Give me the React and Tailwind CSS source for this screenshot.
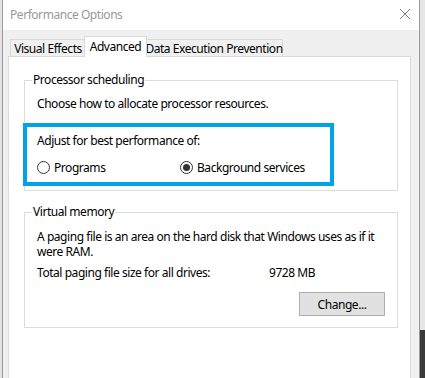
import React from "react";

function Radio({ checked, label, className = "" }) {
  return (
    <div className={"flex items-center " + className}>
      <span className="flex h-[13px] w-[13px] items-center justify-center rounded-full border border-[#333333] bg-white">
        {checked && <span className="h-[7px] w-[7px] rounded-full bg-[#333333]" />}
      </span>
      <span className="ml-[4px]">{label}</span>
    </div>
  );
}

function Group({ title, children, className = "" }) {
  return (
    <div className={"relative border border-[#dcdcdc] " + className}>
      <span className="absolute -top-[9px] left-[7px] bg-white px-[1px] leading-[16px]">{title}</span>
      {children}
    </div>
  );
}

export default function App() {
  return (
    <div
      className="flex h-[378px] w-[425px] overflow-hidden whitespace-nowrap bg-[#f0f0f0] text-[12px] leading-[15px] tracking-[-0.45px] text-black"
      style={{ fontFamily: '"Noto Sans", "Segoe UI", sans-serif' }}
    >
      <div className="w-[2px] bg-[#e4e4e4]" />
      <div className="flex w-[418px] flex-col border-x border-[#9a9a9a]">
        <div className="flex h-[30px] items-center justify-between bg-white pl-[7px] pr-[8px]">
          <span className="mb-[1px] text-[#999999]">Performance Options</span>
          <svg width="12" height="12" viewBox="0 0 12 12" className="mb-[2px]">
            <path d="M1 1 L11 11 M11 1 L1 11" stroke="#808080" strokeWidth="1" fill="none" />
          </svg>
        </div>
        <div className="flex flex-1 flex-col pl-[5px] pr-[8px] pt-[6px]">
          <div className="flex items-end pl-[2px]">
            <div className="flex h-[17px] w-[76px] items-center justify-center border border-b-0 border-[#d9d9d9] bg-[#f0f0f0]">
              Visual Effects
            </div>
            <div className="relative z-10 -mx-[2px] -mb-px flex h-[21px] w-[63px] items-start justify-center border border-b-0 border-[#d9d9d9] bg-white pt-[2px]">
              Advanced
            </div>
            <div className="flex h-[17px] w-[138px] items-center justify-center border border-b-0 border-[#d9d9d9] bg-[#f0f0f0]">
              Data Execution Prevention
            </div>
          </div>
          <div className="flex flex-1 flex-col border border-b-0 border-[#d9d9d9] bg-white pl-[15px] pr-[12px] pt-[23px]">
            <Group title="Processor scheduling" className="pb-[15px] pl-[12px] pt-[15px]">
              <div>Choose how to allocate processor resources.</div>
              <div className="mt-[22px]">Adjust for best performance of:</div>
              <div className="mt-[12px] flex h-[15px] items-center">
                <Radio label="Programs" className="w-[143px]" />
                <Radio checked label="Background services" />
              </div>
              <div className="absolute left-[-2px] top-[42px] h-[63px] w-[311px] border-4 border-[#00a2e8]" />
            </Group>
            <Group title="Virtual memory" className="mt-[21px] flex flex-col pb-[11px] pl-[12px] pr-[12px] pt-[16px]">
              <div>
                A paging file is an area on the hard disk that Windows uses as if it
                <br />
                were RAM.
              </div>
              <div className="mt-[6px] flex">
                <span className="w-[232px]">Total paging file size for all drives:</span>
                <span>9728 MB</span>
              </div>
              <button className="mt-[12px] flex h-[24px] w-[86px] items-center justify-center self-end border border-[#adadad] bg-[#e1e1e1] tracking-[-0.45px]">
                Change...
              </button>
            </Group>
          </div>
        </div>
      </div>
      <div className="flex w-[5px] flex-col bg-[#e6e6e6]">
        <div className="flex-1" />
        <div className="h-[48px] bg-[#3a3a3a]" />
      </div>
    </div>
  );
}
